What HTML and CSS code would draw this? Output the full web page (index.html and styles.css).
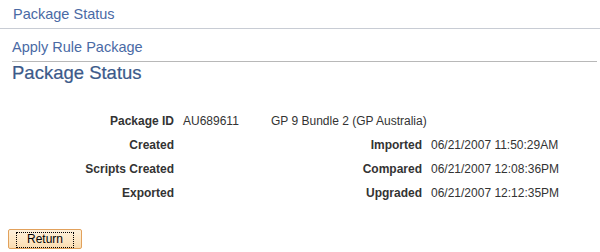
FILE: index.html
```html
<!DOCTYPE html>
<html lang="en">
<head>
  <meta charset="UTF-8">
  <title>Package Status</title>
  <link rel="stylesheet" href="styles.css">
</head>
<body>
  <div class="crumb">Package Status</div>

  <div class="page">
    <div class="title">Apply Rule Package</div>
    <h1>Package Status</h1>

    <div class="status">
      <div class="label">Package ID</div>
      <div class="value">AU689611</div>
      <div class="descr">GP 9 Bundle 2 (GP Australia)</div>

      <div class="label">Created</div>
      <div class="value"></div>
      <div class="label">Imported</div>
      <div class="value">06/21/2007 11:50:29AM</div>

      <div class="label">Scripts Created</div>
      <div class="value"></div>
      <div class="label">Compared</div>
      <div class="value">06/21/2007 12:08:36PM</div>

      <div class="label">Exported</div>
      <div class="value"></div>
      <div class="label">Upgraded</div>
      <div class="value">06/21/2007 12:12:35PM</div>
    </div>
  </div>

  <button class="btn"><span>Return</span></button>
</body>
</html>
```

FILE: styles.css
```css
body {
  margin: 0;
  font-family: "Liberation Sans", Arial, sans-serif;
  background: #ffffff;
  color: #333333;
}

.crumb {
  font-size: 14.5px;
  color: #4a6aa5;
  padding: 6px 13px 0;
  height: 22px;
  border-bottom: 1px solid #c8ccd4;
}

.page {
  padding: 0 3px 0 12px;
}

.title {
  font-size: 14.5px;
  color: #4a6aa5;
  padding-top: 10px;
  height: 22px;
  border-bottom: 1px solid #b8b8b8;
}

h1 {
  margin: 0;
  font-size: 18.5px;
  font-weight: normal;
  color: #3c5a8a;
  line-height: 22px;
  -webkit-text-stroke: 0.2px #3c5a8a;
}

.status {
  display: grid;
  grid-template-columns: 162px 79px 151px auto;
  column-gap: 9px;
  row-gap: 9px;
  margin-top: 30px;
  font-size: 12px;
  line-height: 15px;
}

.label {
  text-align: right;
  font-weight: bold;
  color: #333333;
}

.value {
  color: #333333;
}

.descr {
  grid-column: 3 / 5;
}

.btn {
  display: block;
  margin: 28px 0 0 8px;
  width: 74px;
  height: 20px;
  padding: 2px 7px;
  font-family: "Liberation Sans", Arial, sans-serif;
  font-size: 12px;
  color: #000000;
  background: linear-gradient(#fdf1dc, #fde6c3 60%, #f9dcb0);
  border: 1px solid #e2a15c;
  border-radius: 2px;
}

.btn span {
  display: block;
  height: 14px;
  line-height: 13px;
  border: 1px dotted #000000;
}
```
